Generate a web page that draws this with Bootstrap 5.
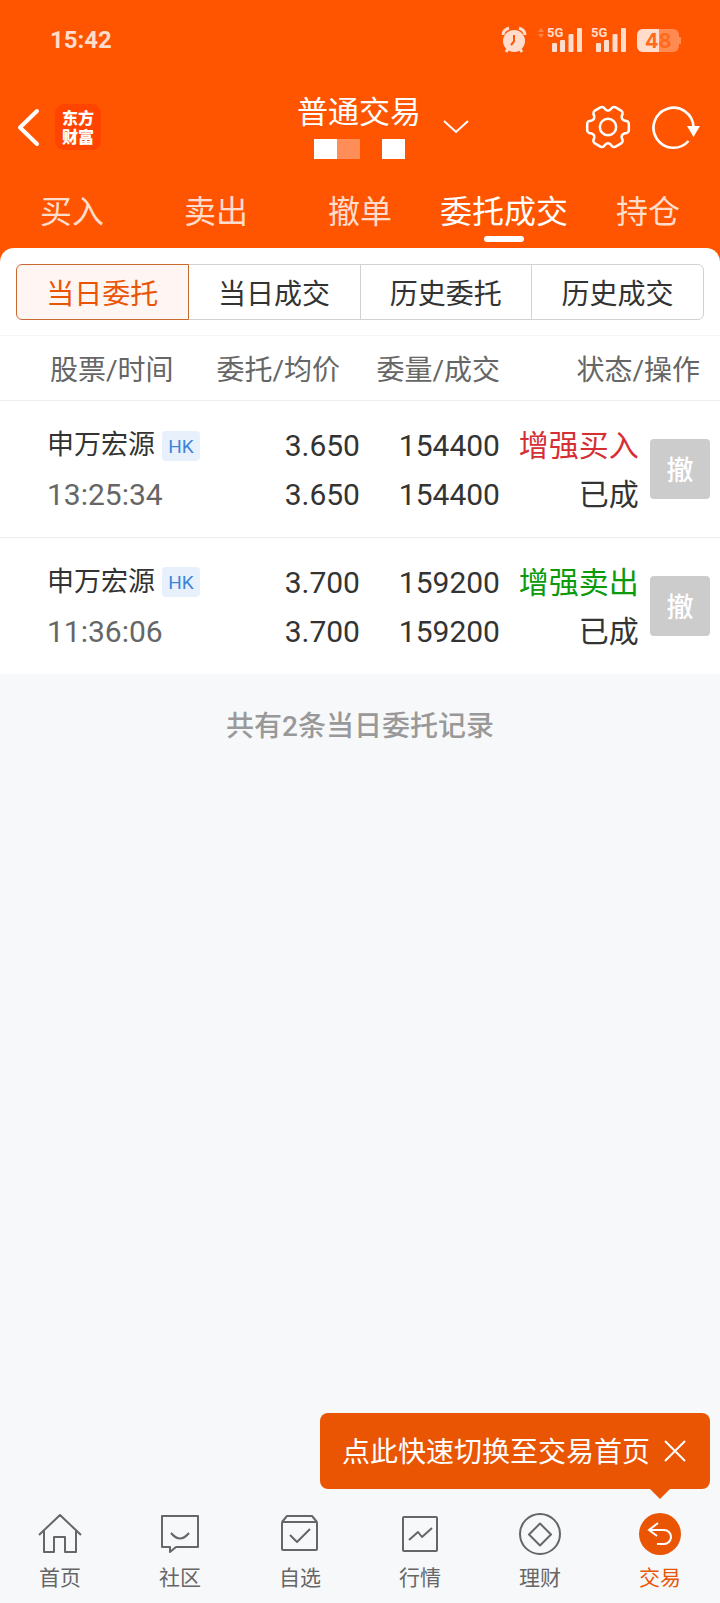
<!DOCTYPE html>
<html lang="zh-CN">
<head>
<meta charset="utf-8">
<meta name="viewport" content="width=device-width, initial-scale=1">
<title>普通交易</title>
<link href="https://cdn.jsdelivr.net/npm/bootstrap@5.3.0/dist/css/bootstrap.min.css" rel="stylesheet">
<style>
  :root { --brand: #ff5500; --deep: #ea5504; --ink: #333; --soft: #666; --line: #ededed; --page: #f7f8fa; }
  body { font-family: Roboto, "Noto Sans CJK SC", sans-serif; background: var(--page); color: var(--ink); font-size: 28px; line-height: 40px; }
  svg { display: block; flex: none; }
  .top-area { background: var(--brand); color: #fff; padding-bottom: 14px; margin-bottom: -14px; }
  .status-bar { height: 80px; padding: 0 40px 0 50px; color: #ffdccb; }
  .clock { font-size: 24px; font-weight: 700; }
  .title-bar { height: 94px; padding: 0 20px 0 16px; }
  .title-side { flex: 1 1 0; }
  .icon-btn { border: 0; background: none; padding: 0; color: inherit; }
  .app-logo { width: 46px; height: 46px; border-radius: 9px; background: #ff4400; font-size: 16px; line-height: 19px; font-weight: 900; font-family: "Noto Sans CJK SC", sans-serif; margin-left: 15px; }
  .page-title { font-size: 31px; line-height: 40px; font-weight: 400; }
  .title-mid { margin-left: 50px; gap: 22px; }
  .acct { margin-top: 6px; margin-bottom: 2px; }
  .acct span { width: 23px; height: 20px; background: #fff; }
  .acct .dim { background: #ff8d57; margin-right: 22px; }
  .tools { gap: 19px; }
  .main-tabs { height: 74px; }
  .main-tabs .nav-link { position: relative; padding: 18px 0 0; height: 74px; font-size: 32px; line-height: 40px; color: #ffdccb; white-space: nowrap; }
  .main-tabs .nav-link.active { color: #fff; }
  .main-tabs .nav-link.active::after { content: ""; position: absolute; left: 50%; top: 62px; width: 40px; height: 6px; margin-left: -20px; border-radius: 3px; background: #fff; }
  .sheet { background: #fff; border-radius: 14px 14px 0 0; }
  .segments { padding: 16px 16px 15px; }
  .segments .btn { --bs-btn-border-radius: 6px; height: 56px; padding: 6px 0 0; font-size: 28px; line-height: 40px; color: var(--ink); border: 1px solid #d0d2d4; background: #fff; }
  .segments .btn.active { color: var(--deep); border-color: #c86a30; background: #fff6f3; }
  .orders { table-layout: fixed; margin: 0; border-top: 1px solid #f5f5f5; }
  .orders th, .orders td { padding: 0; border-bottom: 1px solid var(--line); vertical-align: middle; }
  .orders th { height: 65px; padding-top: 5px; font-weight: 400; color: var(--soft); white-space: nowrap; }
  .orders td { height: 137px; padding-top: 2px; font-size: 30px; line-height: 49px; white-space: nowrap; }
  .orders tbody tr:last-child td { border-bottom: 0; height: 136px; }
  .orders .w-name { width: 28%; }
  .orders .w-price { width: 22%; }
  .orders .w-vol { width: 20%; }
  .orders .w-state { width: 19%; }
  .orders .w-act { width: 11%; }
  .orders .c-name { padding-left: 47px; }
  .orders .c-vol { padding-right: 4px; }
  .orders .c-state { padding-right: 2px; }
  .orders .c-act { padding-top: 0; padding-right: 10px; }
  .orders th.c-name { padding-left: 50px; }
  .orders th.c-price, .orders th.c-end { padding-right: 20px; }
  .stock { font-size: 27px; }
  .market { width: 38px; height: 30px; border-radius: 4px; background: #e8f1fb; color: #3d85d8; font-size: 19px; line-height: 31px; margin-left: 7px; }
  .muted-time { color: var(--soft); }
  .buy { color: #d62f33; }
  .sell { color: #0a9a0a; }
  .cancel-btn { width: 60px; height: 60px; padding: 4px 0 0; border: 0; border-radius: 4px; font-size: 27px; line-height: 40px; font-weight: 500; }
  .cancel-btn:disabled { background: #ccc; color: #fff; opacity: 1; }
  .count-note { padding-top: 33px; color: #999; font-weight: 500; }
  .tip { position: relative; margin: 0 10px 10px; height: 76px; padding: 0 24px 0 22px; gap: 14px; border-radius: 8px; background: var(--deep); color: #fff; }
  .tip span { padding-top: 4px; }
  .tip::after { content: ""; position: absolute; right: 40px; top: 100%; border: 10px solid transparent; border-top-color: var(--deep); border-bottom: 0; }
  .dock { height: 104px; }
  .dock a { gap: 7px; padding-top: 14px; color: var(--soft); font-size: 21px; line-height: 28px; text-decoration: none; }
  .dock a.active { color: var(--deep); }
  .dock svg { fill: none; stroke: currentColor; stroke-width: 2; }
</style>
</head>
<body class="d-flex flex-column min-vh-100">
<header class="top-area">
  <div class="status-bar d-flex align-items-center justify-content-between">
    <span class="clock">15:42</span>
    <svg width="180" height="30" viewBox="0 0 180 30" fill="#ffdccb" overflow="visible" aria-label="48%">
      <!-- alarm clock -->
      <circle cx="14" cy="16" r="11"/>
      <path d="M3 10Q3 5 9 3M25 10Q25 5 19 3M8 24l-2 3M20 24l2 3" fill="none" stroke="#ffdccb" stroke-width="3"/>
      <path d="M14 10v6.500l-3 3.500" fill="none" stroke="#ff5500" stroke-width="2"/>
      <path d="M38 7l3-4 3 4zM38 9h6l-3 4z" opacity=".35"/>
      <!-- signal strength -->
      <g id="signal">
        <text x="47" y="12" font-size="13" font-weight="700">5G</text>
        <rect x="52" y="18" width="5" height="9" rx="1"/><rect x="60" y="15" width="5" height="12" rx="1"/><rect x="68.500" y="9" width="5" height="18" rx="1"/><rect x="77" y="3" width="5" height="24" rx="1"/>
      </g>
      <use href="#signal" x="44"/>
      <!-- battery -->
      <rect x="137" y="4" width="42" height="23" rx="6" opacity=".4"/>
      <rect x="179" y="12" width="2" height="7" opacity=".4"/>
      <path d="M143 4h16v23h-16a6 6 0 0 1-6-6V10a6 6 0 0 1 6-6z"/>
      <text x="145" y="22.500" font-size="20" font-weight="700" fill="#ff6a1c" style="font-family:Inter,sans-serif">48</text>
    </svg>
  </div>
  <div class="title-bar d-flex align-items-center">
    <div class="title-side d-flex align-items-center">
      <button class="icon-btn" type="button" aria-label="返回"><svg width="24" height="40" fill="none" stroke="#fff" stroke-width="4" stroke-linecap="round" stroke-linejoin="round"><path d="M21 4L4 20.500 21 37"/></svg></button>
      <div class="app-logo d-flex flex-column align-items-center justify-content-center"><span>东方</span><span>财富</span></div>
    </div>
    <div class="title-mid d-flex align-items-center">
      <div class="d-flex flex-column align-items-center">
        <h1 class="page-title mb-0">普通交易</h1>
        <div class="acct d-flex"><span></span><span class="dim"></span><span></span></div>
      </div>
      <button class="icon-btn" type="button" aria-label="切换账户"><svg width="26" height="16" fill="none" stroke="#fff" stroke-width="2"><path d="M1 2l12 11L25 2"/></svg></button>
    </div>
    <div class="title-side tools d-flex align-items-center justify-content-end">
      <button class="icon-btn" type="button" aria-label="设置"><svg width="46" height="46" viewBox="-24 -24 48 48" fill="none" stroke="#fff" stroke-width="2.600" stroke-linejoin="round"><path d="M21.700-3.800V3.800Q21.200 5.900 19.500 6.300Q12.100 7 15.200 13.700Q15.700 15.400 14.100 16.900L7.500 20.700Q5.500 21.300 4.300 20.100Q0 14-4.300 20.100Q-5.500 21.300-7.500 20.700L-14.100 16.900Q-15.700 15.400-15.200 13.700Q-12.100 7-19.500 6.300Q-21.200 5.900-21.700 3.800V-3.800Q-21.200-5.900-19.500-6.300Q-12.100-7-15.200-13.700Q-15.700-15.400-14.100-16.900L-7.500-20.700Q-5.500-21.300-4.300-20.100Q0-14 4.300-20.100Q5.500-21.300 7.500-20.700L14.100-16.900Q15.700-15.400 15.200-13.700Q12.100-7 19.500-6.300Q21.200-5.900 21.700-3.800Z"/><circle r="8.500"/></svg></button>
      <button class="icon-btn" type="button" aria-label="刷新"><svg width="50" height="48" viewBox="0 0 50 48" fill="none" stroke="#fff" stroke-width="2.600"><path d="M38.500 38A20 20 0 1 1 43.500 24"/><path d="M37 23h13l-6.500 11z" fill="#fff" stroke="none"/></svg></button>
    </div>
  </div>
  <nav class="main-tabs d-flex text-center">
    <a class="nav-link col" href="#">买入</a>
    <a class="nav-link col" href="#">卖出</a>
    <a class="nav-link col" href="#">撤单</a>
    <a class="nav-link col active" href="#" aria-current="page">委托成交</a>
    <a class="nav-link col" href="#">持仓</a>
  </nav>
</header>
<main class="flex-grow-1">
  <section class="sheet position-relative">
    <div class="segments">
      <div class="btn-group w-100" role="group" aria-label="查询范围">
        <button class="btn col active" type="button">当日委托</button>
        <button class="btn col" type="button">当日成交</button>
        <button class="btn col" type="button">历史委托</button>
        <button class="btn col" type="button">历史成交</button>
      </div>
    </div>
    <table class="orders w-100">
      <colgroup><col class="w-name"><col class="w-price"><col class="w-vol"><col class="w-state"><col class="w-act"></colgroup>
      <thead>
        <tr>
          <th class="c-name" scope="col">股票/时间</th>
          <th class="c-price text-end" scope="col">委托/均价</th>
          <th class="c-vol text-end" scope="col">委量/成交</th>
          <th class="c-end text-end" scope="col" colspan="2">状态/操作</th>
        </tr>
      </thead>
      <tbody>
        <tr>
          <td class="c-name"><div class="d-flex align-items-center"><span class="stock">申万宏源</span><span class="market text-center">HK</span></div><div class="muted-time">13:25:34</div></td>
          <td class="c-price text-end"><div>3.650</div><div>3.650</div></td>
          <td class="c-vol text-end"><div>154400</div><div>154400</div></td>
          <td class="c-state text-end"><div class="buy">增强买入</div><div>已成</div></td>
          <td class="c-act text-end"><button class="btn cancel-btn" type="button" disabled>撤</button></td>
        </tr>
        <tr>
          <td class="c-name"><div class="d-flex align-items-center"><span class="stock">申万宏源</span><span class="market text-center">HK</span></div><div class="muted-time">11:36:06</div></td>
          <td class="c-price text-end"><div>3.700</div><div>3.700</div></td>
          <td class="c-vol text-end"><div>159200</div><div>159200</div></td>
          <td class="c-state text-end"><div class="sell">增强卖出</div><div>已成</div></td>
          <td class="c-act text-end"><button class="btn cancel-btn" type="button" disabled>撤</button></td>
        </tr>
      </tbody>
    </table>
  </section>
  <p class="count-note text-center mb-0">共有2条当日委托记录</p>
</main>
<div class="tip d-flex align-items-center align-self-end">
  <span>点此快速切换至交易首页</span>
  <button class="icon-btn" type="button" aria-label="关闭"><svg width="22" height="22" fill="none" stroke="#fff" stroke-width="2"><path d="M1 1l20 20M21 1L1 21"/></svg></button>
</div>
<nav class="dock row g-0">
  <a class="col d-flex flex-column align-items-center" href="#"><svg width="44" height="44"><path d="M1 22L22 2l21 20M6 18v21h10V24h11v15h11V18" stroke-linejoin="round"/></svg>首页</a>
  <a class="col d-flex flex-column align-items-center" href="#"><svg width="44" height="44" stroke-linejoin="round"><path d="M4 3h36v31H18l-6 5v-5H4zM13 20q9 11 18 0"/></svg>社区</a>
  <a class="col d-flex flex-column align-items-center" href="#"><svg width="44" height="44" stroke-linejoin="round"><rect x="4" y="9" width="35" height="28" rx="1"/><path d="M4 9l5-6h25l5 6M12 22l7 7 13-13"/></svg>自选</a>
  <a class="col d-flex flex-column align-items-center" href="#"><svg width="44" height="44" stroke-linejoin="round"><rect x="5" y="4" width="34" height="34" rx="1"/><path d="M11 27l9-8 4 5 10-9"/></svg>行情</a>
  <a class="col d-flex flex-column align-items-center" href="#"><svg width="44" height="44" stroke-linejoin="round"><circle cx="22" cy="21" r="20"/><path d="M22 10.500L33 21.500 22 32.500 11 21.500z"/></svg>理财</a>
  <a class="col d-flex flex-column align-items-center active" href="#" aria-current="page"><svg width="44" height="44"><circle cx="22" cy="21" r="21" fill="currentColor" stroke="none"/><path d="M20 10l-9 7 8 6M11 17h15a7 7 0 0 1 0 14h-7" stroke="#fff"/></svg>交易</a>
</nav>
<script src="https://cdn.jsdelivr.net/npm/bootstrap@5.3.0/dist/js/bootstrap.bundle.min.js"></script>
</body>
</html>
